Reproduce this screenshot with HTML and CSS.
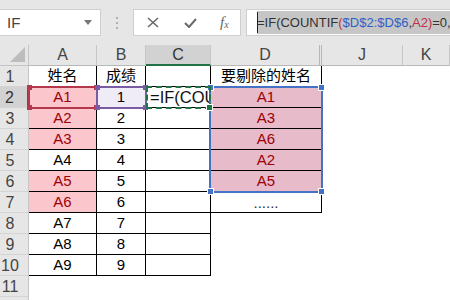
FILE: index.html
```html
<!DOCTYPE html>
<html lang="zh">
<head>
  <meta charset="UTF-8">
  <title>Excel - 剔除姓名</title>
  <link rel="stylesheet" href="styles.css">
</head>
<body>
  <div class="toolbar">
    <div class="namebox">
      <span>IF</span>
      <svg class="drop" width="8" height="5" viewBox="0 0 8 5"><path d="M0 0h8L4 5z" fill="#777"/></svg>
    </div>
    <div class="grip">
      <svg width="3" height="12" viewBox="0 0 3 12"><rect x="0" y="0" width="2" height="2" fill="#b0b0b0"/><rect x="0" y="5" width="2" height="2" fill="#b0b0b0"/><rect x="0" y="10" width="2" height="2" fill="#b0b0b0"/></svg>
    </div>
    <div class="fxbox">
      <svg width="12" height="11" viewBox="0 0 12 11"><path d="M1 1l10 9M11 1L1 10" stroke="#6a6a6a" stroke-width="1.6" fill="none"/></svg>
      <svg width="13" height="10" viewBox="0 0 13 10"><path d="M1 5l4 4 7-8" stroke="#6a6a6a" stroke-width="2" fill="none"/></svg>
      <span class="fx">f<sub>x</sub></span>
    </div>
    <div class="formula">
      <span class="sel"><span class="caret"></span>=IF(COUNTIF<span class="r2">(</span><span class="r1">$D$2:$D$6</span>,<span class="r2">A2)</span>=0,<span class="r3">B</span></span>
    </div>
  </div>

  <div class="sheet">
    <div class="corner"><svg width="15" height="15" viewBox="0 0 15 15"><path d="M15 0V15H0z" fill="#bdbdbd"/></svg></div>
    <div class="colhdr">A</div>
    <div class="colhdr">B</div>
    <div class="colhdr active-col">C</div>
    <div class="colhdr hidden-after">D</div>
    <div class="colhdr">J</div>
    <div class="colhdr">K</div>

    <div class="rowhdr">1</div>
    <div class="cell b">姓名</div>
    <div class="cell b">成绩</div>
    <div class="cell b"></div>
    <div class="cell b">要剔除的姓名</div>
    <div class="cell"></div>
    <div class="cell"></div>

    <div class="rowhdr active-row">2</div>
    <div class="cell b pink">A1</div>
    <div class="cell b lav">1</div>
    <div class="cell b edit">=IF(COU</div>
    <div class="cell b mauve">A1</div>
    <div class="cell"></div>
    <div class="cell"></div>

    <div class="rowhdr">3</div>
    <div class="cell b pink">A2</div>
    <div class="cell b">2</div>
    <div class="cell b"></div>
    <div class="cell b mauve">A3</div>
    <div class="cell"></div>
    <div class="cell"></div>

    <div class="rowhdr">4</div>
    <div class="cell b pink">A3</div>
    <div class="cell b">3</div>
    <div class="cell b"></div>
    <div class="cell b mauve">A6</div>
    <div class="cell"></div>
    <div class="cell"></div>

    <div class="rowhdr">5</div>
    <div class="cell b">A4</div>
    <div class="cell b">4</div>
    <div class="cell b"></div>
    <div class="cell b mauve">A2</div>
    <div class="cell"></div>
    <div class="cell"></div>

    <div class="rowhdr">6</div>
    <div class="cell b pink">A5</div>
    <div class="cell b">5</div>
    <div class="cell b"></div>
    <div class="cell b mauve">A5</div>
    <div class="cell"></div>
    <div class="cell"></div>

    <div class="rowhdr">7</div>
    <div class="cell b pink">A6</div>
    <div class="cell b">6</div>
    <div class="cell b"></div>
    <div class="cell b dots">......</div>
    <div class="cell"></div>
    <div class="cell"></div>

    <div class="rowhdr">8</div>
    <div class="cell b">A7</div>
    <div class="cell b">7</div>
    <div class="cell b"></div>
    <div class="cell"></div>
    <div class="cell"></div>
    <div class="cell"></div>

    <div class="rowhdr">9</div>
    <div class="cell b">A8</div>
    <div class="cell b">8</div>
    <div class="cell b"></div>
    <div class="cell"></div>
    <div class="cell"></div>
    <div class="cell"></div>

    <div class="rowhdr">10</div>
    <div class="cell b">A9</div>
    <div class="cell b">9</div>
    <div class="cell b"></div>
    <div class="cell"></div>
    <div class="cell"></div>
    <div class="cell"></div>

    <div class="rowhdr">11</div>
    <div class="cell"></div>
    <div class="cell"></div>
    <div class="cell"></div>
    <div class="cell"></div>
    <div class="cell"></div>
    <div class="cell"></div>

    <div class="rowhdr"></div>

    <!-- formula reference boxes -->
    <div class="ref ref-red"><i class="h tl"></i><i class="h tr"></i><i class="h bl"></i><i class="h br"></i></div>
    <div class="ref ref-purple"><i class="h tl"></i><i class="h tr"></i><i class="h bl"></i><i class="h br"></i></div>
    <div class="ref ref-blue"><i class="h tl"></i><i class="h tr"></i><i class="h bl"></i><i class="h br"></i></div>
    <div class="ref ref-green"><i class="h br"></i></div>
  </div>
</body>
</html>
```

FILE: styles.css
```css
body {
  margin: 0;
  width: 450px;
  height: 300px;
  overflow: hidden;
  background: #fff;
  font-family: "Liberation Sans", "Noto Sans CJK SC", sans-serif;
}
.toolbar {
  display: flex;
  align-items: center;
  height: 45px;
  background: #e6e6e6;
  overflow: hidden;
}
.namebox {
  display: flex;
  align-items: center;
  justify-content: space-between;
  box-sizing: border-box;
  width: 101px;
  height: 27px;
  padding: 0 8px 0 7px;
  background: #fff;
  border: 1px solid #cfcfcf;
  border-left: none;
  font-size: 15px;
  color: #444;
}
.grip {
  display: flex;
  width: 32px;
  justify-content: center;
}
.fxbox {
  display: flex;
  align-items: center;
  box-sizing: border-box;
  width: 108px;
  height: 27px;
  padding-left: 13px;
  gap: 25px;
  background: #fff;
  border: 1px solid #cfcfcf;
}
.fx {
  font-family: "Liberation Serif", serif;
  font-style: italic;
  font-size: 15px;
  color: #666;
  margin-left: -2px;
}
.fx sub {
  font-size: 10px;
  vertical-align: -1px;
}
.formula {
  flex: 1;
  min-width: 0;
  margin-left: 5px;
  height: 27px;
  box-sizing: border-box;
  padding: 1px 0 1px 10px;
  background: #fff;
  border: 1px solid #cfcfcf;
  border-right: none;
  white-space: nowrap;
  overflow: hidden;
}
.sel {
  display: inline-block;
  position: relative;
  height: 23px;
  line-height: 23px;
  padding-right: 20px;
  background: #c6c6c6;
  font-size: 13px;
  color: #333;
}
.caret {
  position: absolute;
  left: 0;
  top: 1px;
  width: 1px;
  height: 21px;
  background: #222;
}
.r1 { color: #2f5fc8; }
.r2 { color: #c0304a; }
.r3 { color: #8a3ab9; }

.sheet {
  position: relative;
  display: grid;
  grid-template-columns: 29px 68px 49px 65px 111px 81px 47px;
  grid-auto-rows: 21px;
  height: 255px;
  overflow: hidden;
  font-size: 15px;
}
.corner {
  display: flex;
  align-items: flex-end;
  justify-content: flex-end;
  padding: 0 3px 3px 0;
  background: #e6e6e6;
  border-right: 1px solid #c6c6c6;
  border-bottom: 1px solid #c6c6c6;
}
.corner, .colhdr, .rowhdr, .cell {
  box-sizing: border-box;
}
.colhdr {
  background: #e6e6e6;
  border-right: 1px solid #c6c6c6;
  border-bottom: 1px solid #b8b8b8;
  text-align: center;
  line-height: 20px;
  font-size: 16px;
  color: #444;
  white-space: nowrap;
  overflow: hidden;
}
.colhdr:last-of-type {
  text-align: left;
  padding-left: 33px;
  border-right: none;
}
.colhdr.active-col {
  background: #d2d2d2;
  border-bottom: 2px solid #217346;
  color: #333;
}
.colhdr.hidden-after {
  border-right: 3px double #b8b8b8;
}
.rowhdr {
  background: #e6e6e6;
  border-right: 1px solid #c6c6c6;
  border-bottom: 1px solid #d4d4d4;
  padding-right: 8px;
  text-align: center;
  line-height: 21px;
  font-size: 16px;
  color: #444;
}
.rowhdr.active-row {
  background: #d2d2d2;
  border-right: 2px solid #217346;
  color: #333;
}
.cell {
  line-height: 20px;
  text-align: center;
  color: #000;
  white-space: nowrap;
  overflow: hidden;
}
.cell.b {
  border-right: 1px solid #000;
  border-bottom: 1px solid #000;
}
.cell.pink {
  background: #fcc6cd;
  color: #9c0006;
}
.cell.mauve {
  background: #e8bbca;
  color: #9c0006;
}
.cell.lav {
  background: #efecf7;
}
.cell.edit {
  text-align: left;
  padding-left: 4px;
  font-size: 16.5px;
  color: #111;
  text-overflow: clip;
}
.cell.dots {
  line-height: 21px;
  font-size: 15px;
  color: #333;
}

.ref {
  position: absolute;
  box-sizing: border-box;
  border: 2px solid;
}
.ref-red { left: 28px; top: 41px; width: 70px; height: 23px; border-color: #b4384c; }
.ref-purple { left: 96px; top: 41px; width: 51px; height: 23px; border-color: #7b5aa6; }
.ref-blue { left: 209px; top: 41px; width: 114px; height: 107px; border-color: #4472c4; }
.ref-green { left: 146px; top: 41px; width: 65px; height: 23px; border: 2px dashed #217346; }
.h {
  position: absolute;
  width: 5px;
  height: 5px;
}
.ref-red .h { background: #b4384c; }
.ref-purple .h { background: #7b5aa6; }
.ref-blue .h { background: #4472c4; outline: 1px solid #fff; }
.ref-green .h { background: #217346; outline: 1px solid #fff; }
.tl { left: -3px; top: -3px; }
.tr { right: -3px; top: -3px; }
.bl { left: -3px; bottom: -3px; }
.br { right: -3px; bottom: -3px; }
```
